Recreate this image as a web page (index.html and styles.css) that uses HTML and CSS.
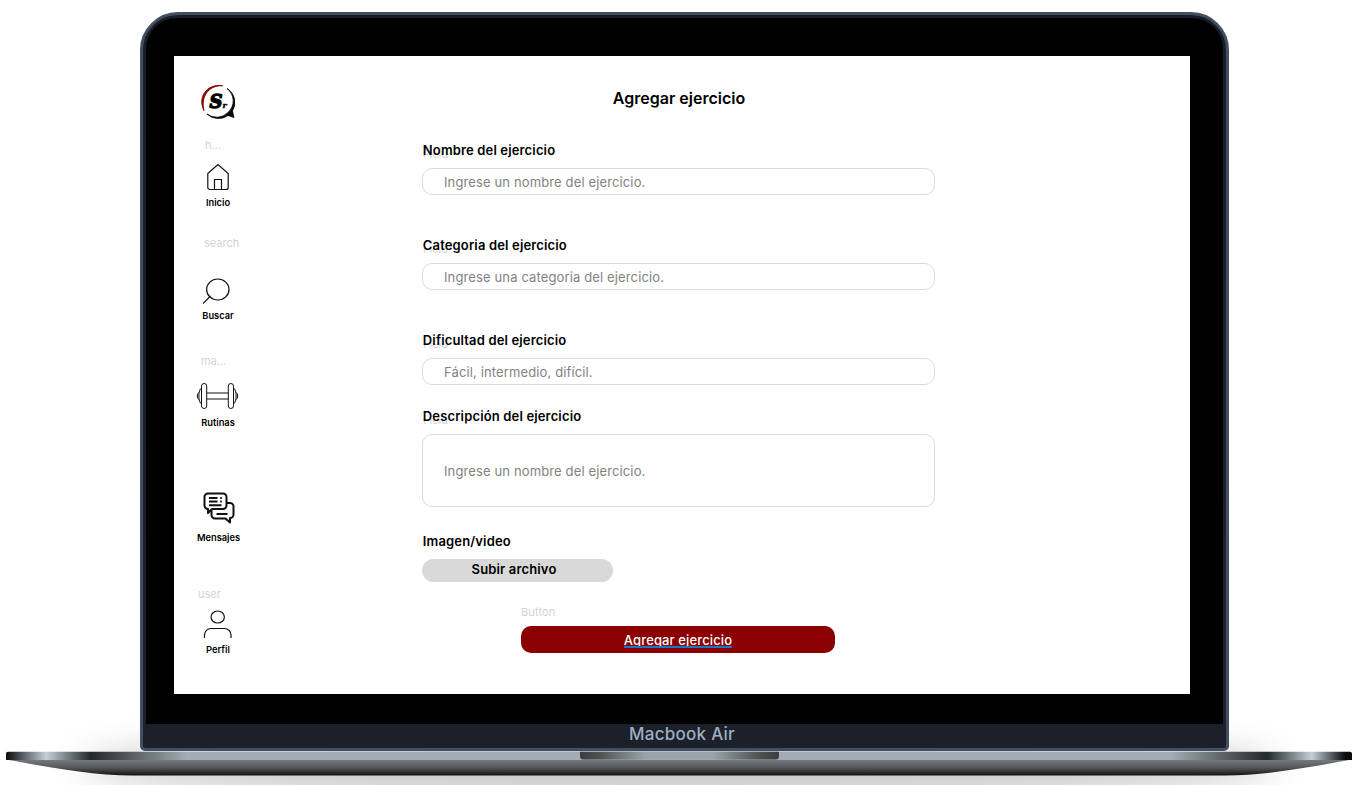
FILE: index.html
```
<!DOCTYPE html>
<html lang="es">
<head>
<meta charset="utf-8">
<title>Agregar ejercicio</title>
<link rel="stylesheet" href="styles.css">
</head>
<body>
<div class="laptop">
  <div class="floor-shadow"></div>
  <div class="lid">
    <div class="bezel">
      <div class="screen">
        <nav class="sidebar">
          <svg class="logo" viewBox="0 0 38 38">
            <path d="M5 27.500C-1.500 15 7 .5 23.500 2.700 9.500 2 1.300 14 5 27.500Z" fill="#8b0000" stroke="#8b0000" stroke-width="1"/>
            <path d="M28 5.500A16.500 16.500 0 0 1 33.500 28L35 34.500 29 32.500A16.500 16.500 0 0 1 8 31 16 16 0 0 0 29 29.500 15.500 15.500 0 0 0 28 5.500Z" fill="#080808" stroke="#080808" stroke-width=".8"/>
            <text class="logo-s" x="10.500" y="24.500">S</text>
            <text class="logo-r" x="23.500" y="25">r</text>
          </svg>
          <span class="ghost ghost-home">h...</span>
          <a class="nav-item home">
            <svg width="24" height="28" viewBox="0 0 24 28"><path d="M1.800 10.500 12 1.500l10.200 9V24.500a2 2 0 0 1-2 2h-16.400a2 2 0 0 1-2-2ZM8.500 26.500v-10h7v10"/></svg>
            <span>Inicio</span>
          </a>
          <span class="ghost ghost-search">search</span>
          <a class="nav-item search">
            <svg width="30" height="28" viewBox="0 0 30 28"><ellipse cx="14.800" cy="12.500" rx="11.200" ry="10.500"/><path d="M7.500 19 0 26.500"/></svg>
            <span>Buscar</span>
          </a>
          <span class="ghost ghost-routine">ma...</span>
          <a class="nav-item routine">
            <svg width="44" height="28" viewBox="0 0 44 28"><rect x="5.500" y="1.500" width="5.200" height="25" rx="2.600"/><rect x="32.300" y="1.500" width="5.200" height="25" rx="2.600"/><path d="M10.700 11h21.600M10.700 17h21.600M5.500 6C2 7.500 2 20.500 5.500 22M37.500 6c3.500 1.500 3.500 14.500 0 16M2.900 10.500C.9 11.500.9 16.500 2.900 17.500M40.100 10.500c2 1 2 6 0 7"/></svg>
            <span>Rutinas</span>
          </a>
          <a class="nav-item messages">
            <svg width="34" height="34" viewBox="0 0 34 34"><path d="M6 2.500h15a3.500 3.500 0 0 1 3.500 3.500v8.500a3.500 3.500 0 0 1-3.500 3.500H10l-4 4v-4a3.500 3.500 0 0 1-3.500-3.500V6A3.500 3.500 0 0 1 6 2.500ZM24.500 12H28a3.500 3.500 0 0 1 3.500 3.500V23.500a3.500 3.500 0 0 1-3.500 3.500v4.500L23.500 27.500H13a3.500 3.500 0 0 1-3.500-3.500v-5M7 7h8.500M7 10.500h8.500M7 14.300h12.500M18.200 7h1.600M18.200 10.500h1.600M14.500 23h11"/></svg>
            <span>Mensajes</span>
          </a>
          <span class="ghost ghost-user">user</span>
          <a class="nav-item profile">
            <svg width="30" height="30" viewBox="0 0 30 30"><ellipse cx="14.700" cy="8" rx="6.700" ry="6"/><path d="M1.500 29v-3a6.500 6.500 0 0 1 6.500-6.500h13.500a6.500 6.500 0 0 1 6.500 6.500v3"/></svg>
            <span>Perfil</span>
          </a>
        </nav>
        <main class="content">
          <h1>Agregar ejercicio</h1>
          <form class="form">
            <div class="field">
              <label>Nombre del ejercicio</label><span class="hint">Field</span>
              <div class="input">Ingrese un nombre del ejercicio.</div>
            </div>
            <div class="field">
              <label>Categoria del ejercicio</label><span class="hint">Field</span>
              <div class="input">Ingrese una categoria del ejercicio.</div>
            </div>
            <div class="field short">
              <label>Dificultad del ejercicio</label><span class="hint">Field</span>
              <div class="input">Fácil, intermedio, difícil.</div>
            </div>
            <div class="field area">
              <label>Descripción del ejercicio</label><span class="hint">Field</span>
              <div class="input tall">Ingrese un nombre del ejercicio.</div>
            </div>
            <label class="upload-label">Imagen/video</label>
            <div class="upload">Subir archivo</div>
            <span class="ghost ghost-button">Button</span>
            <div class="submit"><span>Agregar ejercicio</span></div>
          </form>
        </main>
      </div>
    </div>
    <div class="brand">Macbook Air</div>
  </div>
  <svg class="base" viewBox="0 0 1358 26">
    <defs>
      <linearGradient id="edge">
        <stop offset="0" stop-color="#080b0e"/><stop offset=".03" stop-color="#c5cfd6"/><stop offset=".063" stop-color="#22282b"/><stop offset=".1" stop-color="#646a6c"/><stop offset=".134" stop-color="#a3acb4"/>
        <stop offset=".866" stop-color="#a3acb4"/><stop offset=".9" stop-color="#646a6c"/><stop offset=".937" stop-color="#22282b"/><stop offset=".97" stop-color="#c5cfd6"/><stop offset=".995" stop-color="#080b0e"/>
      </linearGradient>
      <linearGradient id="under" x2="0" y2="1"><stop stop-color="#747b7f"/><stop offset=".5" stop-color="#55595c"/><stop offset="1" stop-color="#111113"/></linearGradient>
      <linearGradient id="notch"><stop stop-color="#3c3c3d"/><stop offset=".1" stop-color="#505253"/><stop offset=".33" stop-color="#98a3aa"/><stop offset=".67" stop-color="#98a3aa"/><stop offset=".9" stop-color="#505253"/><stop offset="1" stop-color="#3c3c3d"/></linearGradient>
    </defs>
    <path d="M6 8.500H1352C1305 17 1264 24.500 1225 24.500H133C94 24.500 53 17 6 8.500Z" fill="url(#under)"/>
    <path d="M8 .7H1350a2 2 0 0 1 2 2V9H6V2.700a2 2 0 0 1 2-2Z" fill="url(#edge)"/>
    <path d="M580 .7H779V5a3.500 3.500 0 0 1-3.500 3.500H583.500A3.500 3.500 0 0 1 580 5Z" fill="url(#notch)"/>
  </svg>
</div>
</body>
</html>
```
FILE: styles.css
```
* { box-sizing: border-box; }
body { margin: 0; background: #fff; font-family: Inter, "Liberation Sans", sans-serif; }
.laptop { position: relative; width: 1358px; height: 785px; padding-top: 12px; overflow: hidden; isolation: isolate; }
.floor-shadow { position: absolute; z-index: -1; left: 80px; top: 735px; width: 1198px; height: 62px; border-radius: 50%; background: #c8c8c8; filter: blur(17px); }
.lid { width: 1089px; height: 739px; margin-left: 140px; border: 3px solid #434e62; border-radius: 38px 38px 5px 5px; background: linear-gradient(#171e29, #1b202b); padding: 3px 3px 0; }
.bezel { height: 706px; background: #000; border-radius: 31px 31px 0 0; padding: 38px 0 0 28px; }
.screen { display: flex; width: 1016px; height: 638px; background: #fff; }
.brand { height: 20px; padding-right: 5px; color: #a0aec0; font-size: 17px; letter-spacing: .25px; font-weight: 500; line-height: 20px; text-align: center; }
.base { display: block; width: 1358px; height: 26px; }
.sidebar { width: 88px; padding-top: 27px; display: flex; flex-direction: column; align-items: center; }
.logo { width: 38px; height: 38px; flex: none; }
.logo-s { font: italic 900 18px "DejaVu Serif", serif; stroke: #000; stroke-width: 1.3px; }
.logo-r { font: italic 900 8px "DejaVu Serif", serif; stroke: #000; stroke-width: .4px; }
.ghost { color: #d3d3d3; font-size: 11px; line-height: 14px; height: 14px; }
.ghost-home { margin: 17px 0 10px 31px; align-self: flex-start; }
.ghost-search { margin: 28px 0 26px 30px; align-self: flex-start; }
.ghost-routine { margin: 32px 0 14px 27px; align-self: flex-start; }
.ghost-user { margin: 43px 0 8px 24px; align-self: flex-start; }
.nav-item { display: flex; flex-direction: column; align-items: center; color: #000; font-size: 9.3px; font-weight: 600; line-height: 12px; padding-left: 1px; }
.nav-item svg { display: block; fill: none; stroke: #111; stroke-width: 1.2; }
.home { padding: 1px 0 0; margin-bottom: -1px; }
.home svg { margin-bottom: 6px; }
.search { padding: 1px 0 0; }
.search svg { margin-bottom: 5px; }
.routine { padding-left: 0; }
.routine svg { margin-bottom: 7px; stroke-width: 1; }
.messages { margin-top: 62px; }
.messages svg { margin-bottom: 7px; stroke-width: 2; stroke-linejoin: round; }
.profile { padding-left: 0; }
.profile svg { margin-bottom: 5px; }
.content { width: 834px; padding: 32px 0 0 160px; }
h1 { width: 514px; margin: 0 0 34px; text-align: center; font-size: 16px; line-height: 20px; font-weight: 600; }
.form { width: 513px; display: flex; flex-direction: column; }
.field { position: relative; height: 95px; }
.short { height: 76px; }
.area { height: 125px; }
label { display: block; position: relative; z-index: 1; height: 16px; margin-bottom: 10px; padding-left: .8px; font-size: 13px; letter-spacing: .15px; line-height: 16px; font-weight: 600; }
/* Faint layer name that shows below its label. */
.hint { position: absolute; left: 1px; top: 5px; color: #d3d3d3; font-size: 11px; line-height: 14px; clip-path: inset(6px 0 0); }
.input { height: 27px; padding-left: 21px; border: 1px solid #dcdcdc; border-radius: 10px; color: #828282; font-size: 13px; letter-spacing: .13px; line-height: 26px; }
.tall { height: 73px; line-height: 72px; }
.upload { width: 191px; height: 23px; padding-right: 7px; border-radius: 12px; background: #d9d9d9; font-size: 13px; letter-spacing: .15px; line-height: 21px; font-weight: 600; text-align: center; }
.ghost-button { margin: 23px 0 7px 99px; letter-spacing: .15px; }
.submit { width: 314px; height: 27px; margin-left: 99px; border-radius: 10px; background: #8b0000; color: #fff; font-size: 13px; letter-spacing: .12px; font-weight: 500; line-height: 16px; text-align: center; padding-top: 6px; }
.submit span { position: relative; }
.submit span::after { content: ""; position: absolute; left: 0; right: 0; bottom: 0; height: 2px; background: #1976c9; }
.upload-label { margin-bottom: 10px; }
```
